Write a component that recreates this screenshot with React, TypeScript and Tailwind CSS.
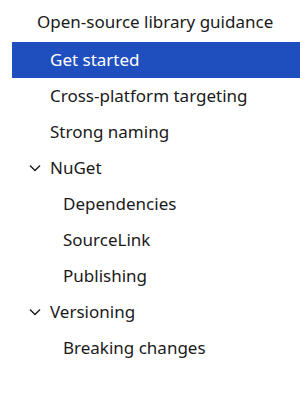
import React from 'react';

type Item = { label: string; level: number; chevron?: boolean; selected?: boolean };

const items: Item[] = [
  { label: 'Get started', level: 1, selected: true },
  { label: 'Cross-platform targeting', level: 1 },
  { label: 'Strong naming', level: 1 },
  { label: 'NuGet', level: 1, chevron: true },
  { label: 'Dependencies', level: 2 },
  { label: 'SourceLink', level: 2 },
  { label: 'Publishing', level: 2 },
  { label: 'Versioning', level: 1, chevron: true },
  { label: 'Breaking changes', level: 2 },
];

const Chevron = () => (
  <svg width="12" height="8" viewBox="0 0 12 8" className="shrink-0">
    <path d="M1 1.5 L6 6.5 L11 1.5" fill="none" stroke="#1a1a1a" strokeWidth="1.4" />
  </svg>
);

export default function App() {
  return (
    <div className="w-[300px] h-[396px] bg-white pt-1" style={{ fontFamily: '"Noto Sans", "Open Sans", sans-serif' }}>
      <div className="h-9 flex items-center pl-[37px] text-[17px] text-[#1a1a1a]">Open-source library guidance</div>
      <ul className="mt-0.5 ml-3">
        {items.map((item) => (
          <li
            key={item.label}
            className={`h-9 flex items-center text-[17px] ${item.selected ? 'bg-[#1f4fbf] text-white' : 'text-[#1a1a1a]'} ${item.chevron ? 'pl-[17px] gap-[9px]' : item.level === 2 ? 'pl-[51px]' : 'pl-[38px]'}`}
          >
            {item.chevron && <Chevron />}
            <span>{item.label}</span>
          </li>
        ))}
      </ul>
    </div>
  );
}
